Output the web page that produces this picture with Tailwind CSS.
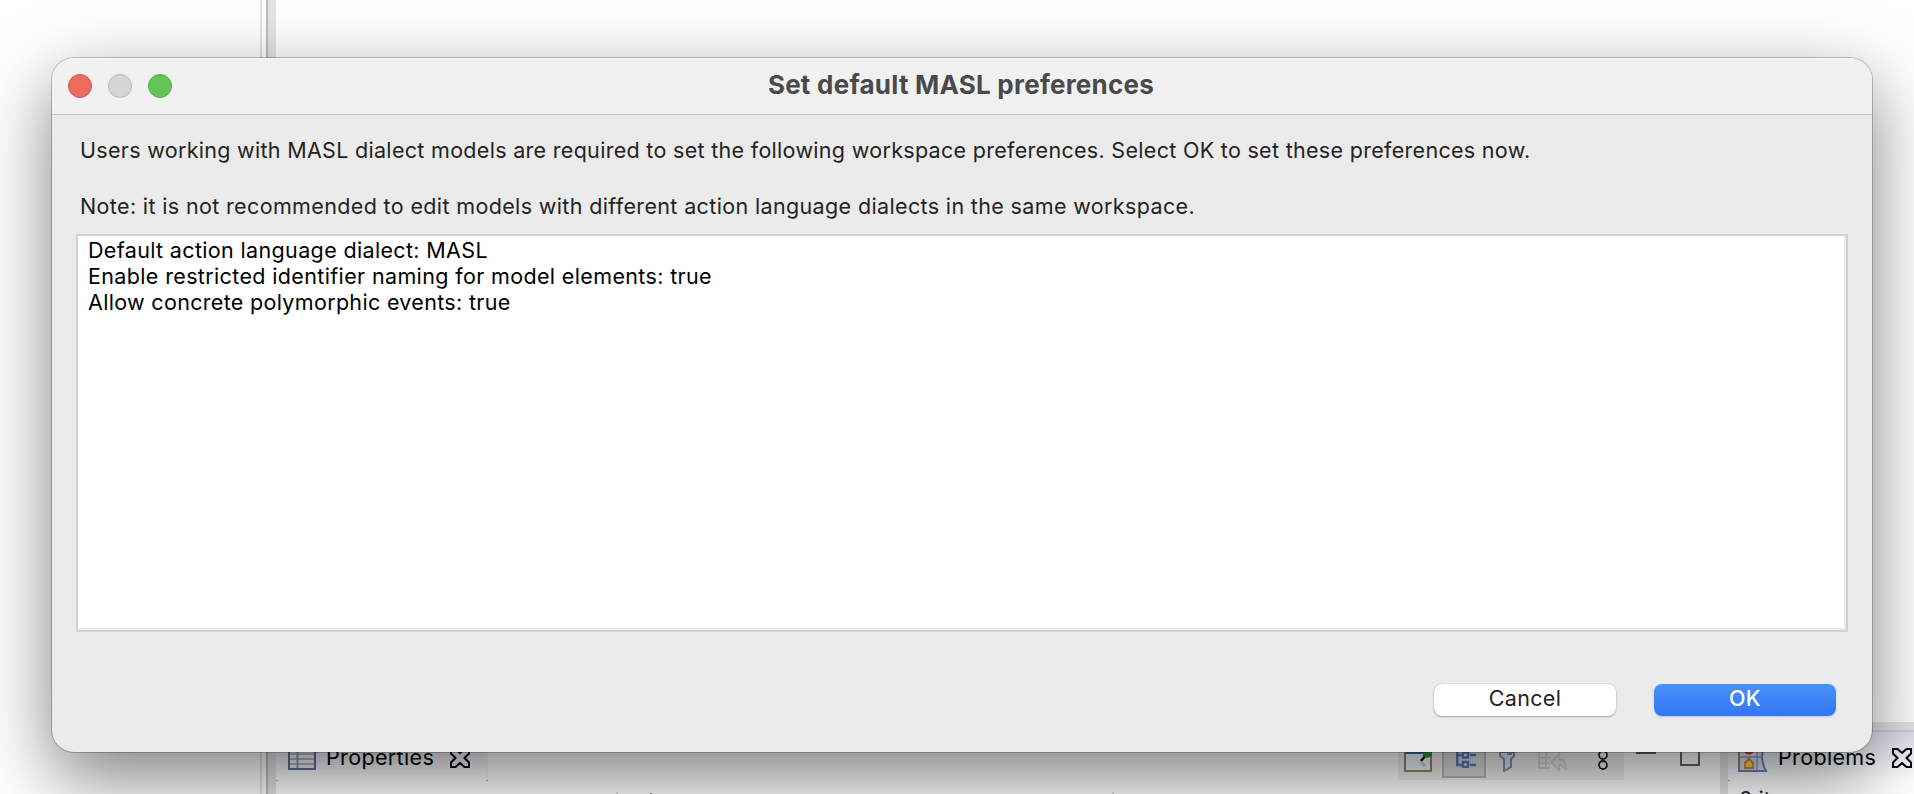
<!DOCTYPE html>
<html lang="en">
<head>
<meta charset="utf-8">
<title>Set default MASL preferences</title>
<script src="https://cdn.jsdelivr.net/npm/@tailwindcss/browser@4"></script>
</head>
<body class="relative h-[794px] w-[1914px] overflow-hidden bg-white font-['Inter',sans-serif] text-black">
  <!-- Workbench behind the dialog -->
  <div class="flex h-full w-full">
    <div class="w-[262px] shrink-0 border-r-2 border-[#e2e2e2]"></div>
    <div class="w-1 shrink-0"></div>
    <div class="w-[10px] shrink-0 border-l-2 border-[#bcbcbc] bg-[#e4e4e4]"></div>
    <div class="flex min-w-0 grow flex-col">
      <div class="h-[722px] shrink-0"></div>
      <div class="h-2 shrink-0 bg-[#e4e4e4]"></div>
      <div class="flex h-16 min-w-0">
        <section class="flex w-[1444px] shrink-0 flex-col border-t-2 border-[#cdd0dc]">
          <div class="flex h-12 shrink-0">
            <div class="flex w-[212px] items-center border-r-2 border-[#f3f3f3] bg-linear-to-b from-[#dde1ec] to-white pl-3">
              <svg class="h-7 w-7 shrink-0" viewBox="0 0 28 28"><rect x="1" y="1" width="26" height="26" fill="#eef0f4" stroke="#5d6f9c" stroke-width="2"/><path d="M2 12h24M2 17h24M2 22h24" stroke="#b3b6bd" stroke-width="2"/><path d="M9.500 2v24" stroke="#8799bf" stroke-width="2"/></svg>
              <span class="ml-[10px] mt-0.5 whitespace-nowrap text-[21.5px] leading-7 tracking-[0.35px]">Properties</span>
              <svg class="ml-4 mt-1 h-5 w-5 shrink-0" viewBox="0 0 20 20" fill="none" stroke="#000" stroke-width="2"><path d="M1 1h4.500l4.500 4 4.500-4H19v4.500L14.500 10l4.500 4.500V19h-4.500L10 15l-4.500 4H1v-4.500L5.500 10 1 5.500z"/></svg>
            </div>
            <div class="flex grow items-start justify-end">
              <div class="flex h-12 w-[226px] items-start bg-[#f0f0f0]">
                <!-- Pin view -->
                <svg class="ml-1.5 mt-3 h-7 w-7 shrink-0" viewBox="0 0 28 28"><rect x="1" y="1" width="26" height="26" fill="#f1fafd" stroke="#94895f" stroke-width="2"/><path d="M2 4h18v6H2z" fill="#3d6bb5"/><path d="M17 17l5-6" stroke="#111" stroke-width="2.500"/><path d="M19 8h9v4l-5 2-4-2z" fill="#2f8f3a"/><path d="M17 18l4 4" stroke="#b8d3de" stroke-width="3"/></svg>
                <!-- Show categories, pressed -->
                <div class="ml-2.5 flex h-[46px] w-11 shrink-0 items-end border-2 border-[#b8b8b8] bg-[#dcdcdc] pb-2 pl-3">
                  <svg class="h-[26px] w-5" viewBox="0 0 20 26" fill="none" stroke="#5c78ba" stroke-width="2.500"><path d="M1.250 0v23h5M1 13h5"/><rect x="7" y="10.500" width="5" height="5" fill="#dfe8f8"/><rect x="7" y="20" width="5" height="5" fill="#dfe8f8"/><path d="M14 13h6M14 23h6"/></svg>
                </div>
                <!-- Filter -->
                <svg class="ml-[13px] mt-3 h-7 w-4 shrink-0" viewBox="0 0 16 28"><path d="M1 8h14v4l-3 3v8l-7 4V15l-4-3z" fill="#dbe8f2" stroke="#7d93b9" stroke-width="2"/><path d="M8 10h5" stroke="#7d93b9" stroke-width="2"/></svg>
                <!-- Restore defaults, disabled -->
                <svg class="ml-[23px] mt-3 h-7 w-[30px] shrink-0" viewBox="0 0 30 28" fill="none" stroke="#d6d6d6" stroke-width="2"><path d="M1 2v22h11M1 14h12M1 19h10M8 2v22"/><path d="M13 18l8-8v5c5 0 8 4 7 11-1-3-3-5-7-5v5z" fill="#e8e8e8"/></svg>
                <!-- View menu -->
                <svg class="ml-[30px] mt-[7px] h-8 w-[10px] shrink-0" viewBox="0 0 10 32" fill="none" stroke="#222" stroke-width="1.800"><circle cx="5" cy="6" r="4"/><circle cx="5" cy="16" r="4"/><circle cx="5" cy="26" r="4"/></svg>
              </div>
              <svg class="ml-3 mr-5 h-9 w-16 shrink-0" viewBox="0 0 64 36" fill="none" stroke="#666" stroke-width="2"><path d="M1 17h18v4H1z"/><path d="M45 17h18v16H45z"/></svg>
            </div>
          </div>
          <div class="flex h-0.5 justify-between"><i class="h-px w-0.5 bg-[#aaa]"></i><i class="mr-[1232px] h-px w-0.5 bg-[#aaa]"></i></div>
          <div class="mt-2.5 flex h-0.5"><i class="ml-[340px] h-0.5 w-0.5 bg-[#dedede]"></i><i class="ml-8 mt-px h-px w-0.5 bg-[#777]"></i><i class="ml-[460px] h-0.5 w-0.5 bg-[#dedede]"></i></div>
        </section>
        <div class="w-2 shrink-0 bg-[#e4e4e4]"></div>
        <section class="min-w-0 grow overflow-hidden border-t-2 border-[#cdd0dc]">
          <div class="flex h-12 items-center bg-linear-to-b from-[#dde1ec] to-white">
            <svg class="ml-[10px] mt-1 h-7 w-[30px] shrink-0" viewBox="0 0 30 28"><path d="M1 0h27c-5 8-5 18 0 27H1z" fill="#d5e0f2" stroke="#6b82b4" stroke-width="2"/><path d="M1 0v26" stroke="#8a8b62" stroke-width="2"/><path d="M2 13h22M19 1v25" stroke="#8ba0cc" stroke-width="1.500"/><circle cx="11" cy="5" r="5.500" fill="#d33a34"/><path d="M7 24v-5l4-4.500 4 4.500v5z" fill="#fbd45a" stroke="#d98a2b" stroke-width="2"/></svg>
            <span class="ml-[10px] mt-0.5 whitespace-nowrap text-[21.5px] leading-7 tracking-[0.35px]">Problems</span>
            <svg class="ml-4 mt-1 h-5 w-5 shrink-0" viewBox="0 0 20 20" fill="none" stroke="#000" stroke-width="2"><path d="M1 1h4.500l4.500 4 4.500-4H19v4.500L14.500 10l4.500 4.500V19h-4.500L10 15l-4.500 4H1v-4.500L5.500 10 1 5.500z"/></svg>
          </div>
          <div class="h-px w-0.5 bg-[#aaa]"></div>
          <div class="ml-[11px] mt-1 text-[21.5px] leading-7 text-[#222]">0 items</div>
        </section>
      </div>
    </div>
  </div>

  <!-- Dialog -->
  <div role="dialog" class="absolute left-[52px] top-[58px] flex h-[694px] w-[1820px] flex-col overflow-hidden rounded-[22px] bg-[#ebebeb] shadow-[0_0_0_1px_rgba(0,0,0,0.22),0_26px_72px_rgba(0,0,0,0.5)]">
    <header class="grid h-[57px] shrink-0 grid-cols-[1fr_auto_1fr] items-center border-b border-t border-b-[#c4c4c4] border-t-[#f8f8f8] bg-[#f1f1f1]">
      <div class="-mt-px flex gap-4 pl-4">
        <span class="size-6 rounded-full border border-[#d9554a] bg-[#ec6a5e]"></span>
        <span class="size-6 rounded-full border border-[#b9b9b9] bg-[#d6d6d6]"></span>
        <span class="size-6 rounded-full border border-[#54ab45] bg-[#62c655]"></span>
      </div>
      <h1 class="-mt-1 mr-0.5 whitespace-nowrap text-[26px] font-bold leading-8 tracking-[0.24px] text-[#4a4a4a]">Set default MASL preferences</h1>
      <div></div>
    </header>
    <p class="ml-7 mt-[21px] whitespace-nowrap text-[21.5px] leading-7 tracking-[0.305px] text-[#232323]">Users working with MASL dialect models are required to set the following workspace preferences. Select OK to set these preferences now.</p>
    <p class="ml-7 mt-7 whitespace-nowrap text-[21.5px] leading-7 tracking-[0.36px] text-[#232323]">Note: it is not recommended to edit models with different action language dialects in the same workspace.</p>
    <div class="mx-6 mt-[14px] h-[398px] shrink-0 border-2 border-[#d2d2d2] bg-white pl-[10px] pt-px text-[21.5px] leading-[26px] tracking-[0.35px] shadow-[inset_-2px_-2px_0_#ebebeb]">
      <div>Default action language dialect: MASL</div>
      <div class="tracking-[0.36px]">Enable restricted identifier naming for model elements: true</div>
      <div class="tracking-[0.32px]">Allow concrete polymorphic events: true</div>
    </div>
    <div class="mt-[52px] flex justify-end gap-[38px] pr-9 text-[21.5px] leading-7 tracking-[0.3px]">
      <button class="h-8 w-[182px] rounded-lg bg-white pb-1 text-[#232323] shadow-[0_0_1px_rgba(0,0,0,0.3),0_1px_2px_rgba(0,0,0,0.3)]">Cancel</button>
      <button class="h-8 w-[182px] rounded-lg bg-linear-to-b from-[#4a91f9] to-[#3276f6] pb-1 font-medium text-white shadow-[0_1px_2px_rgba(50,118,246,0.3)]">OK</button>
    </div>
  </div>
</body>
</html>
